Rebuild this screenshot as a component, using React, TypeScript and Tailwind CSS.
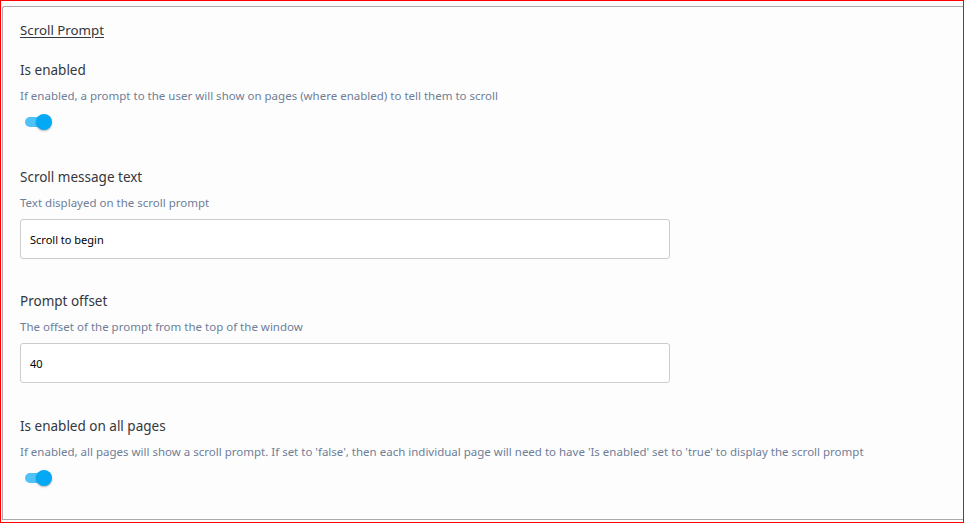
import React from "react";

type ToggleProps = { on?: boolean };

function Toggle({ on = true }: ToggleProps) {
  return (
    <div className="flex items-center h-[20px] pl-[5px]">
      <span className={`block w-[22px] h-[10px] rounded-full ${on ? "bg-[#4fc3f7]" : "bg-gray-300"}`} />
      <span className="block -ml-[11px] w-4 h-4 rounded-full bg-[#03a9f4] shadow-[0_1px_2px_rgba(0,0,0,0.3)]" />
    </div>
  );
}

function Field({
  label,
  help,
  children,
  className = "",
}: {
  label: string;
  help: string;
  children: React.ReactNode;
  className?: string;
}) {
  return (
    <div className={className}>
      <h3 className="text-[13.5px] leading-[20px] text-[#34373e]">{label}</h3>
      <p className="mt-[8px] text-[11.5px] leading-[16px] text-[#6e7e98]">{help}</p>
      {children}
    </div>
  );
}

function TextInput({ value }: { value: string }) {
  return (
    <input
      type="text"
      defaultValue={value}
      className="block w-[650px] h-[40px] px-[9px] border border-[#cccccc] rounded-[3px] bg-white text-[11px] text-black outline-none"
    />
  );
}

export default function App() {
  return (
    <div
      className="w-[964px] h-[523px] border border-[#ff0000] bg-[#fdfdfd]"
      style={{ fontFamily: '"Noto Sans", "Open Sans", sans-serif' }}
    >
      <div className="mt-[5px] ml-px h-[514px] border-t border-l border-b border-[#a9a9a9] rounded-tl-[3px] pl-[17px] pt-[14px]">
        <h2 className="text-[13.3px] leading-[18px] text-[#333740] underline underline-offset-2 w-fit">
          Scroll Prompt
        </h2>

        <Field
          className="mt-[21px]"
          label="Is enabled"
          help="If enabled, a prompt to the user will show on pages (where enabled) to tell them to scroll"
        >
          <div className="mt-[8px]">
            <Toggle />
          </div>
        </Field>

        <Field className="mt-[35px]" label="Scroll message text" help="Text displayed on the scroll prompt">
          <div className="mt-[8px]">
            <TextInput value="Scroll to begin" />
          </div>
        </Field>

        <Field
          className="mt-[32px]"
          label="Prompt offset"
          help="The offset of the prompt from the top of the window"
        >
          <div className="mt-[8px]">
            <TextInput value="40" />
          </div>
        </Field>

        <Field
          className="mt-[33px]"
          label="Is enabled on all pages"
          help="If enabled, all pages will show a scroll prompt. If set to 'false', then each individual page will need to have 'Is enabled' set to 'true' to display the scroll prompt"
        >
          <div className="mt-[8px]">
            <Toggle />
          </div>
        </Field>
      </div>
    </div>
  );
}
